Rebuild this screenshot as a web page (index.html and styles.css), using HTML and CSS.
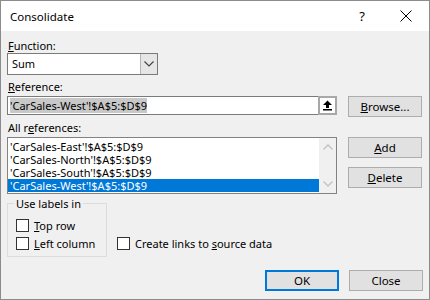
FILE: index.html
```html
<!DOCTYPE html>
<html lang="en">
<head>
    <meta charset="UTF-8">
    <meta name="viewport" content="width=device-width, initial-scale=1.0">
    <link rel="stylesheet" href="styles.css">
    <title>Consolidate</title>
</head>
<body>
    <div class="dialog">
        <div class="titlebar">
            <span class="title">Consolidate</span>
            <span class="help">?</span>
            <span class="close-x">
                <svg width="12" height="12" viewBox="0 0 12 12"><path d="M0.5 0.5 L11.5 11.5 M11.5 0.5 L0.5 11.5" stroke="#000" stroke-width="1" fill="none"/></svg>
            </span>
        </div>
        <div class="content">
            <div class="label label-first"><u>F</u>unction:</div>
            <div class="combo">
                <span class="combo-value">Sum</span>
                <span class="combo-btn">
                    <svg width="10" height="6" viewBox="0 0 10 6"><path d="M0.5 0.5 L5 5 L9.5 0.5" stroke="#444" stroke-width="1.2" fill="none"/></svg>
                </span>
            </div>

            <div class="label"><u>R</u>eference:</div>
            <div class="row">
                <div class="ref-input">
                    <span class="ref-text"><span class="selected-text">'CarSales-West'!$A$5:$D$9</span></span>
                    <span class="ref-btn">
                        <svg width="11" height="11" viewBox="0 0 11 11"><path d="M5.5 0.5 L10 5 L7 5 L7 8 L4 8 L4 5 L1 5 Z" fill="#000"/><rect x="1" y="9" width="9" height="1.5" fill="#000"/></svg>
                    </span>
                </div>
                <button class="btn btn-browse"><u>B</u>rowse...</button>
            </div>

            <div class="label label-all">All r<u>e</u>ferences:</div>
            <div class="row">
                <div class="listbox">
                    <ul class="items">
                        <li>'CarSales-East'!$A$5:$D$9</li>
                        <li>'CarSales-North'!$A$5:$D$9</li>
                        <li>'CarSales-South'!$A$5:$D$9</li>
                        <li class="active">'CarSales-West'!$A$5:$D$9</li>
                    </ul>
                    <div class="scrollbar">
                        <svg width="10" height="6" viewBox="0 0 10 6"><path d="M0.5 5.5 L5 1 L9.5 5.5" stroke="#c2c2c2" stroke-width="1.3" fill="none"/></svg>
                        <svg width="10" height="6" viewBox="0 0 10 6"><path d="M0.5 0.5 L5 5 L9.5 0.5" stroke="#c2c2c2" stroke-width="1.3" fill="none"/></svg>
                    </div>
                </div>
                <div class="side-buttons">
                    <button class="btn"><u>A</u>dd</button>
                    <button class="btn"><u>D</u>elete</button>
                </div>
            </div>

            <div class="options">
                <fieldset class="group">
                    <legend>Use labels in</legend>
                    <div class="check"><span class="box"></span><span><u>T</u>op row</span></div>
                    <div class="check"><span class="box"></span><span><u>L</u>eft column</span></div>
                </fieldset>
                <div class="check check-links"><span class="box"></span><span>Create links to <u>s</u>ource data</span></div>
            </div>

            <div class="footer">
                <button class="btn btn-ok">OK</button>
                <button class="btn">Close</button>
            </div>
        </div>
    </div>
</body>
</html>
```

FILE: styles.css
```css
* {
    box-sizing: border-box;
}

body {
    margin: 0;
    background: #ffffff;
    font-family: "Noto Sans", "Open Sans", sans-serif;
    font-size: 11px;
    color: #000;
}

.dialog {
    width: 430px;
    height: 300px;
    border: 1px solid #8c8c8c;
    background: #f0f0f0;
}

.titlebar {
    height: 30px;
    background: #ffffff;
    display: flex;
    align-items: center;
    padding-left: 9px;
}

.title {
    flex: 1;
    font-size: 11.5px;
}

.help {
    font-size: 13px;
    margin-right: 35px;
}

.close-x {
    display: flex;
    margin-right: 17px;
}

.content {
    padding: 0 6px;
}

.label {
    height: 15px;
    line-height: 15px;
    margin-top: 4px;
    margin-bottom: 2px;
    padding-left: 1px;
}

.label-first {
    margin-top: 7px;
    margin-bottom: 0;
}

.label-all {
    margin-top: 3px;
    margin-bottom: 2px;
}

/* combo box */
.combo {
    width: 151px;
    height: 22px;
    border: 1px solid #7a7a7a;
    background: #fff;
    display: flex;
}

.combo-value {
    flex: 1;
    line-height: 20px;
    padding-left: 4px;
}

.combo-btn {
    width: 17px;
    background: #e6e6e6;
    border-left: 1px solid #b4b4b4;
    display: flex;
    align-items: center;
    justify-content: center;
}

.row {
    display: flex;
    gap: 11px;
}

/* reference input */
.ref-input {
    width: 330px;
    height: 19px;
    border: 1px solid #7a7a7a;
    background: #fff;
    display: flex;
}

.ref-text {
    flex: 1;
    padding-left: 2px;
    padding-top: 1px;
}

.selected-text {
    background: #c8c8c8;
    line-height: 15px;
    display: inline-block;
}

.ref-btn {
    width: 19px;
    border: 2px solid #a8a8a8;
    margin: -1px -1px -1px 0;
    background: #fff;
    display: flex;
    align-items: center;
    justify-content: center;
}

.btn {
    width: 74px;
    height: 21px;
    background: #e1e1e1;
    border: 1px solid #adadad;
    font-family: inherit;
    font-size: 11.5px;
    padding: 0;
    color: #000;
}

/* list of references */
.listbox {
    width: 330px;
    height: 57px;
    border: 1px solid #828282;
    background: #fff;
    display: flex;
}

.items {
    list-style: none;
    margin: 0;
    padding: 2px 0 0 0;
    flex: 1;
}

.items li {
    height: 13px;
    line-height: 13px;
    padding-left: 2px;
}

.items li.active {
    background: #0078d7;
    color: #fff;
}

.scrollbar {
    width: 17px;
    background: #f0f0f0;
    display: flex;
    flex-direction: column;
    justify-content: space-between;
    align-items: center;
    padding: 6px 0 6px 0;
}

.side-buttons {
    display: flex;
    flex-direction: column;
    gap: 9px;
}

/* labels group + checkboxes */
.options {
    display: flex;
    align-items: flex-end;
    margin-top: 3px;
}

.group {
    width: 100px;
    height: 60px;
    margin: 0;
    padding: 6px 0 0 8px;
    border: 1px solid #dcdcdc;
}

.group legend {
    padding: 0 2px;
    margin-left: -2px;
    line-height: 13px;
}

.check {
    display: flex;
    align-items: center;
    gap: 5px;
    height: 18px;
}

.box {
    width: 13px;
    height: 13px;
    border: 1px solid #333;
    background: #fff;
}

.check-links {
    margin-left: 10px;
    margin-bottom: 5px;
}

.footer {
    display: flex;
    justify-content: flex-end;
    gap: 10px;
    margin-top: 13px;
}

.btn-ok {
    border: 2px solid #0078d7;
}
```
